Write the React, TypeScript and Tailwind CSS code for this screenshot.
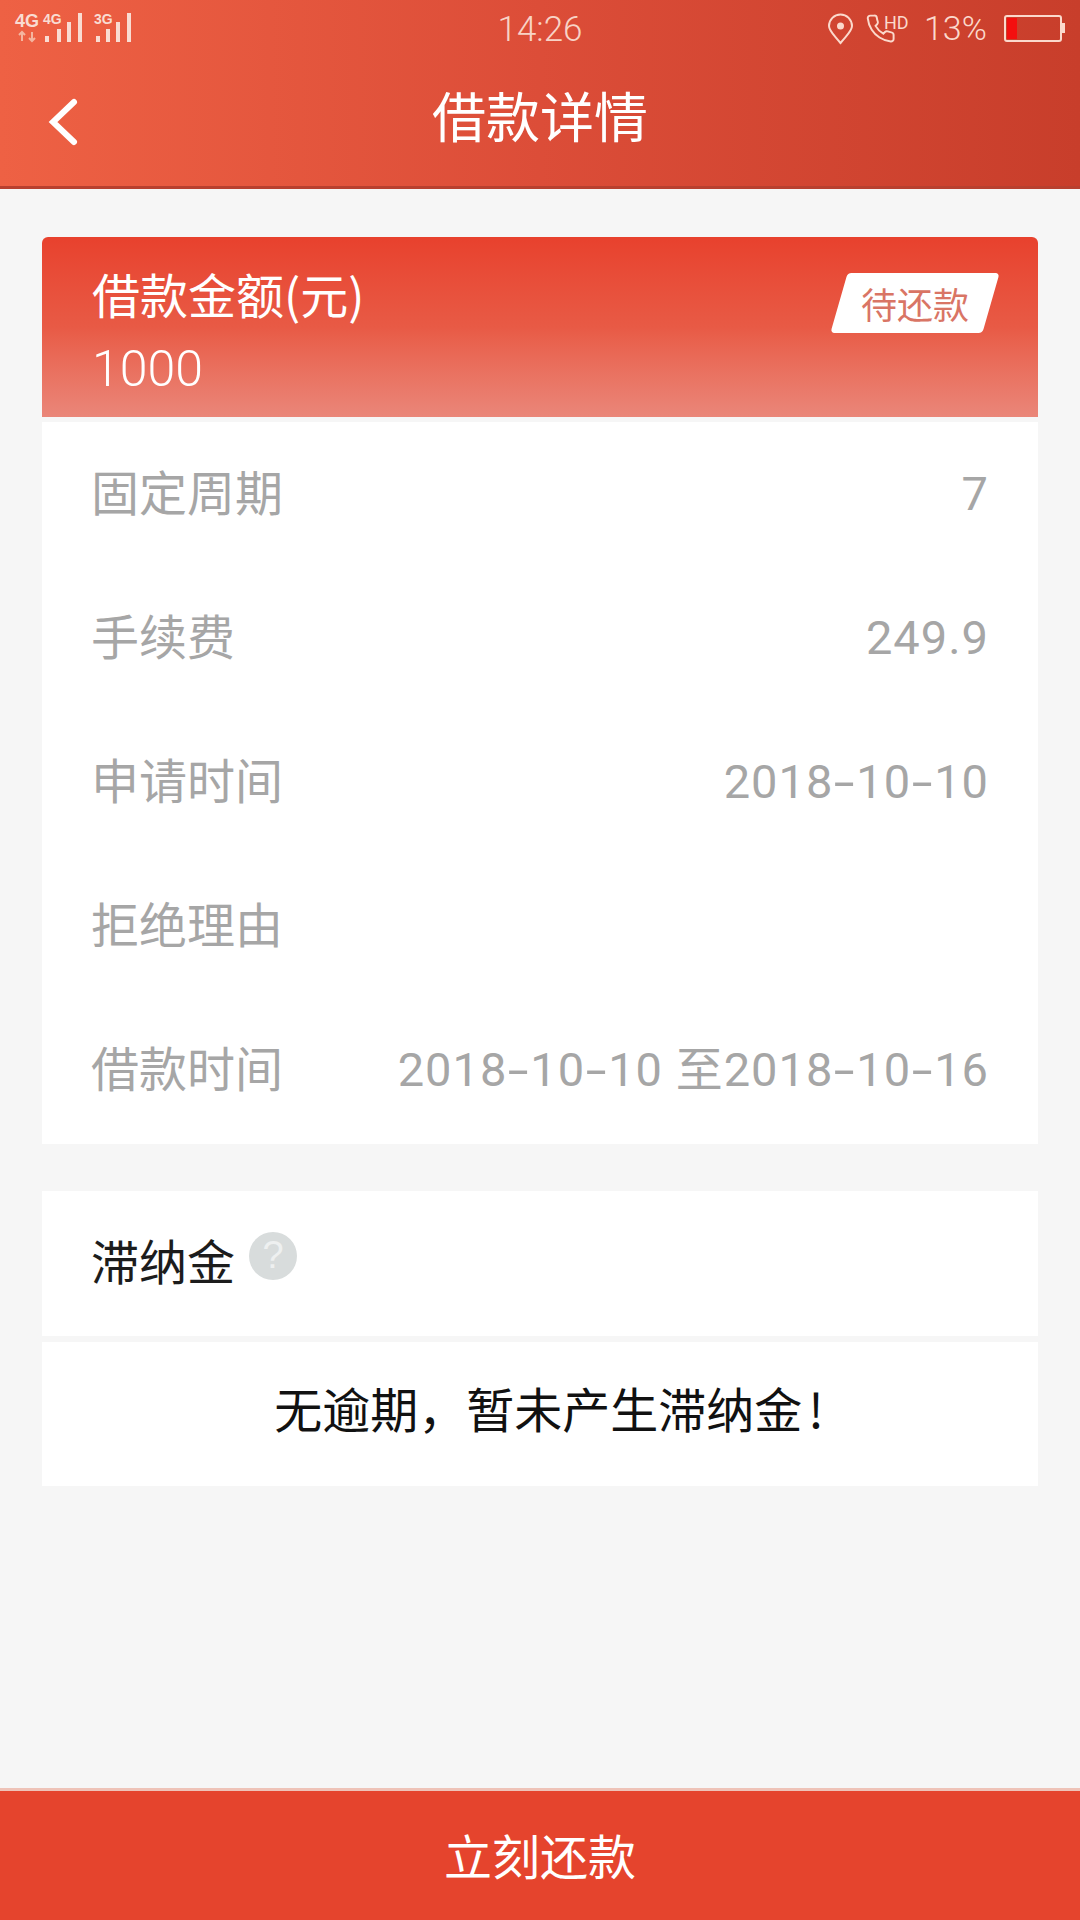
import React from "react";

const FONT = '[font-family:"Noto_Sans_CJK_SC","Noto_Sans",sans-serif]';

const rows = [
    { label: "固定周期", value: "7" },
    { label: "手续费", value: "249.9" },
    { label: "申请时间", value: "2018-10-10" },
    { label: "拒绝理由", value: "" },
    { label: "借款时间", value: "2018-10-10 至2018-10-16" },
];

const SignalBars = ({ xs }: { xs: number[] }) => (
    <g fill="#f9dcd2">
        <rect x={xs[0]} y="36" width="4" height="6" />
        <rect x={xs[1]} y="29" width="4" height="13" />
        <rect x={xs[2]} y="22" width="4" height="20" />
        <rect x={xs[3]} y="13" width="4" height="29" />
    </g>
);

const StatusLeft = () => (
    <svg width="140" height="50" viewBox="0 0 140 50">
        <text x="15" y="27" fontSize="18" fontWeight="700" fill="#f9dcd2" fontFamily="Liberation Sans">4G</text>
        <text x="43" y="24" fontSize="14" fontWeight="700" fill="#f9dcd2" fontFamily="Liberation Sans">4G</text>
        <path d="M22 41v-9m-3 3 3-3 3 3M32 32v9m-3-3 3 3 3-3" stroke="#f4b5a0" strokeWidth="2" fill="none" />
        <SignalBars xs={[45, 57, 67, 78]} />
        <text x="94" y="24" fontSize="14" fontWeight="700" fill="#f9dcd2" fontFamily="Liberation Sans">3G</text>
        <SignalBars xs={[96, 106, 116, 127]} />
    </svg>
);

const App = () => {
    return (
        <div className={`w-[1080px] h-[1920px] bg-[#f6f6f6] flex flex-col ${FONT}`}>
            {/* Header with status bar */}
            <header className="relative h-[189px] shrink-0 bg-gradient-to-r from-[#ee6144] via-[#dc4d38] to-[#c83e2b] border-b-[3px] border-[#b8402f]">
                <div className="flex justify-between h-[60px]">
                    <StatusLeft />
                    <span className="absolute left-0 right-0 top-[8px] text-center text-[35px] leading-[44px] text-[#f8d3c6] [font-family:Roboto,sans-serif] font-light">
                        14:26
                    </span>
                    <div className="flex items-start mt-[6px] mr-[14px]">
                        <svg width="86" height="40" viewBox="0 -8 86 40" fill="none" stroke="#fbd9cc">
                            {/* location pin */}
                            <path d="M14.500 29C8 21 3 17 3 12a11.500 11.500 0 0 1 23 0c0 5-5 9-11.500 17z" strokeWidth="2" />
                            <circle cx="14.500" cy="12" r="3.500" fill="#fbd9cc" stroke="none" />
                            {/* phone */}
                            <g transform="translate(39 -1) scale(1.300)" strokeWidth="1.500">
                                <path d="M22 16.920v3a2 2 0 0 1-2.180 2 19.790 19.790 0 0 1-8.630-3.070 19.500 19.500 0 0 1-6-6 19.790 19.790 0 0 1-3.070-8.670A2 2 0 0 1 4.110 2h3a2 2 0 0 1 2 1.720 12.840 12.840 0 0 0 .7 2.810 2 2 0 0 1-.45 2.110L8.090 9.910a16 16 0 0 0 6 6l1.270-1.270a2 2 0 0 1 2.110-.45 12.840 12.840 0 0 0 2.810.7A2 2 0 0 1 22 16.920z" />
                            </g>
                            <text x="58" y="15" fontSize="18" fill="#fbd9cc" stroke="none" fontFamily="Roboto">
                                HD
                            </text>
                        </svg>
                        <span className="ml-[12px] mt-[8px] w-[78px] text-[34px] leading-[28px] text-[#fbd9cc] [font-family:Roboto,sans-serif] font-light">
                            13%
                        </span>
                        <svg width="64" height="30" viewBox="0 0 64 30" className="mt-[8px]">
                            {/* battery */}
                            <rect x="3" y="2" width="56" height="25" rx="2" fill="none" stroke="#fbd9cc" strokeWidth="2" />
                            <rect x="5" y="4" width="10" height="21" fill="#f40f0f" />
                            <rect x="60" y="9" width="3" height="10" fill="#fbd9cc" />
                        </svg>
                    </div>
                </div>
                <div className="flex items-center justify-center h-[126px] relative">
                    <svg width="36" height="52" viewBox="0 0 36 52" className="absolute left-[44px] top-[36px]" fill="none">
                        <path d="M30 6L9 26l21 20" stroke="#ffffff" strokeWidth="6" strokeLinecap="round" />
                    </svg>
                    <h1 className="text-[54px] leading-[60px] text-white mt-[-16px]">借款详情</h1>
                </div>
            </header>

            <main className="flex-1 px-[42px] pt-[48px]">
                {/* Amount card */}
                <div className="h-[180px] rounded-t-[6px] bg-gradient-to-b from-[#e8412d] via-[#e85a45] to-[#ea8679] flex justify-between pl-[50px] pr-[47px] pt-[24px]">
                    <div className="text-white">
                        <p className="text-[48px] leading-[64px]">借款金额(元)</p>
                        <p className="text-[50px] leading-[64px] mt-[12px] [font-family:Roboto,sans-serif] font-light">1000</p>
                    </div>
                    <div className="mt-[12px] w-[152px] h-[60px] bg-white rounded-[4px] -skew-x-[16deg] flex items-center justify-center">
                        <span className="skew-x-[16deg] text-[36px] leading-[44px] text-[#d97565]">待还款</span>
                    </div>
                </div>

                {/* Detail rows */}
                <div className="mt-[5px] h-[722px] bg-white pl-[49px] pr-[49px]">
                    {rows.map((row) => (
                        <div key={row.label} className="h-[144px] flex items-center justify-between text-[48px] text-[#a6a6a6]">
                            <span className="pb-[8px]">{row.label}</span>
                            <span className="text-[47px] [font-family:Roboto,'Noto_Sans_CJK_SC',sans-serif] tracking-[1px]">
                                {row.value.split("-").map((part, i) => (
                                    <React.Fragment key={i}>
                                        {i > 0 && <span className="inline-block mx-[4.5px] scale-x-[1.6]">-</span>}
                                        {part}
                                    </React.Fragment>
                                ))}
                            </span>
                        </div>
                    ))}
                </div>

                {/* Late fee */}
                <div className="mt-[47px] h-[145px] bg-white flex items-center pl-[49px]">
                    <span className="text-[48px] leading-[60px] text-[#1c1c1c] mb-[10px]">滞纳金</span>
                    <span className="ml-[14px] mt-[-16px] w-[48px] h-[48px] rounded-full bg-[#d8dcdc] flex items-center justify-center text-[38px] text-[#eef0f0] [font-family:'Liberation_Sans',sans-serif]">
                        ?
                    </span>
                </div>
                <div className="mt-[6px] h-[144px] bg-white flex items-center justify-center pb-[14px] pl-[18px] text-[48px] text-[#111111]">
                    无逾期，暂未产生滞纳金<span className="ml-[6px]">!</span>
                </div>
            </main>

            <button className="h-[132px] shrink-0 bg-[#e5442d] text-white text-[48px] pb-[4px] border-t-[3px] border-[#eec3b8]">
                立刻还款
            </button>
        </div>
    );
};

export default App;
